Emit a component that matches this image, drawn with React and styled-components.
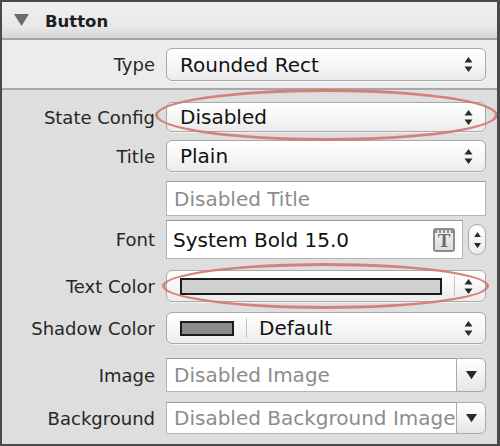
import React from "react";
import styled, { createGlobalStyle } from "styled-components";

const GlobalStyle = createGlobalStyle`
	html, body {
		margin: 0;
		padding: 0;
		background: #ffffff;
	}
	body {
		font-family: "DejaVu Sans", "Liberation Sans", sans-serif;
	}
`;

const Panel = styled.div`
	position: relative;
	width: 500px;
	height: 446px;
	box-sizing: border-box;
	border: 2px solid #4a4a4a;
	border-right-width: 3px;
	background: #dedede;
	overflow: hidden;
	display: flex;
	flex-direction: column;
`;

const Header = styled.div`
	height: 36px;
	flex: none;
	display: flex;
	align-items: center;
	gap: 16px;
	padding-left: 12px;
	background: linear-gradient(#efefef 0%, #e9e9e9 65%, #d6d6d6 100%);
	border-bottom: 2px solid #a3a3a3;
`;

const HeaderTitle = styled.span`
	font-weight: bold;
	font-size: 16.5px;
	color: #1e1e1e;
	margin-top: 2px;
`;

const Section = styled.div`
	background: ${(p) => p.$bg};
	padding-top: ${(p) => p.$top}px;
	padding-bottom: ${(p) => p.$bottom || 0}px;
	border-bottom: ${(p) => (p.$divider ? "2px solid #a8a8a8" : "none")};
	flex: ${(p) => (p.$grow ? 1 : "none")};
`;

const Row = styled.div`
	display: grid;
	grid-template-columns: 153px 320px;
	column-gap: 11px;
	align-items: center;
	height: ${(p) => p.$h}px;
	margin-top: ${(p) => p.$mt || 0}px;
`;

const Label = styled.div`
	text-align: right;
	font-size: 18px;
	color: #262626;
	white-space: nowrap;
`;

const PopUp = styled.div`
	height: ${(p) => p.$h || 32}px;
	box-sizing: border-box;
	border: 1px solid #a9a9a9;
	border-radius: 6px;
	background: linear-gradient(#ffffff 0%, #f7f7f7 50%, #ebebeb 100%);
	display: flex;
	align-items: center;
	padding-left: ${(p) => p.$pad ?? 13}px;
	padding-right: 12px;
	font-size: 20px;
	color: #111;
	box-shadow: 0 1px 0 rgba(255, 255, 255, 0.6);
`;

const Value = styled.span`
	flex: 1;
	white-space: nowrap;
	overflow: hidden;
`;

const TextField = styled.div`
	height: 35px;
	box-sizing: border-box;
	border: 1px solid #b4b4b4;
	border-top-color: #9a9a9a;
	background: #fff;
	display: flex;
	align-items: center;
	padding-left: 7px;
	font-size: 20px;
	color: ${(p) => (p.$placeholder ? "#8c8c8c" : "#111")};
	white-space: nowrap;
	overflow: hidden;
`;

const FontControls = styled.div`
	display: flex;
	align-items: center;
	gap: 5px;
`;

const FontField = styled(TextField)`
	width: 297px;
	height: 39px;
	padding-left: 6px;
	padding-right: 7px;
	flex: none;
`;

const FontIcon = styled.div`
	width: 18px;
	height: 20px;
	border: 2px solid #8d8d8d;
	border-radius: 3px;
	background: linear-gradient(#f4f4f4, #dcdcdc);
	position: relative;
	display: flex;
	align-items: flex-end;
	justify-content: center;
	font-family: "Liberation Serif", "DejaVu Serif", serif;
	font-weight: bold;
	font-size: 19px;
	line-height: 18px;
	color: #6d6d6d;
	margin-left: auto;
	flex: none;
	&::before {
		content: "";
		position: absolute;
		top: 0;
		left: 0;
		right: 0;
		height: 3px;
		background: repeating-linear-gradient(90deg, #8d8d8d 0 2px, #e0e0e0 2px 4px);
	}
`;

const Stepper = styled.div`
	width: 19px;
	height: 31px;
	box-sizing: border-box;
	border: 1px solid #a9a9a9;
	border-radius: 9px;
	background: linear-gradient(#ffffff, #ececec);
	display: flex;
	flex-direction: column;
	align-items: center;
	justify-content: space-between;
	padding: 7px 0 6px;
`;

const WellSlot = styled.div`
	flex: 1;
	display: flex;
	align-items: center;
	gap: 12px;
	height: 100%;
`;

const Well = styled.div`
	width: ${(p) => p.$w}px;
	height: ${(p) => p.$hh}px;
	box-sizing: border-box;
	border: 2px solid #1c1c1c;
	background: ${(p) => p.$fill};
	flex: none;
`;

const Divider = styled.div`
	width: 1px;
	align-self: stretch;
	margin: 5px 0;
	background: #c4c4c4;
	flex: none;
`;

const Combo = styled.div`
	display: flex;
	height: ${(p) => p.$h}px;
`;

const ComboField = styled(TextField)`
	flex: 1;
	height: 100%;
	border-right: none;
`;

const ComboButton = styled.div`
	width: 30px;
	flex: none;
	box-sizing: border-box;
	border: 1px solid #a9a9a9;
	border-radius: 0 6px 6px 0;
	background: linear-gradient(#ffffff, #e6e6e6);
	display: flex;
	align-items: center;
	justify-content: center;
`;

const Annotation = styled.div`
	position: absolute;
	left: ${(p) => p.$x}px;
	top: ${(p) => p.$y}px;
	width: ${(p) => p.$w}px;
	height: ${(p) => p.$h}px;
	box-sizing: border-box;
	border: 3px solid rgba(208, 120, 112, 0.9);
	border-radius: 50%;
	pointer-events: none;
`;

const Disclosure = () => (
	<svg width="15" height="12" viewBox="0 0 15 12">
		<path d="M0 0 H15 L7.5 12 Z" fill="#6b6b6b" />
	</svg>
);

const UpDown = () => (
	<svg width="9" height="15" viewBox="0 0 9 15">
		<path d="M4.5 0 L8.5 5.5 H0.5 Z" fill="#2a2a2a" />
		<path d="M0.5 9.5 H8.5 L4.5 15 Z" fill="#2a2a2a" />
	</svg>
);

const Tri = ({ down, size = 7 }) => (
	<svg width={size} height={size * 0.75} viewBox="0 0 8 6">
		<path d={down ? "M0 0 H8 L4 6 Z" : "M4 0 L8 6 H0 Z"} fill="#2a2a2a" />
	</svg>
);

const Field = ({ label, h, mt, children }) => (
	<Row $h={h} $mt={mt}>
		<Label>{label}</Label>
		{children}
	</Row>
);

export default function App() {
	return (
		<>
			<GlobalStyle />
			<Panel>
				<Header>
					<Disclosure />
					<HeaderTitle>Button</HeaderTitle>
				</Header>
				<Section $bg="#ececec" $top={8} $bottom={7} $divider>
					<Field label="Type" h={33}>
						<PopUp $h={33}>
							<Value>Rounded Rect</Value>
							<UpDown />
						</PopUp>
					</Field>
				</Section>
				<Section $bg="#dedede" $top={12} $grow>
					<Field label="State Config" h={30}>
						<PopUp $h={30}>
							<Value>Disabled</Value>
							<UpDown />
						</PopUp>
					</Field>
					<Field label="Title" h={32} mt={8}>
						<PopUp>
							<Value>Plain</Value>
							<UpDown />
						</PopUp>
					</Field>
					<Field label="" h={35} mt={9}>
						<TextField $placeholder>Disabled Title</TextField>
					</Field>
					<Field label="Font" h={39} mt={4}>
						<FontControls>
							<FontField>
								<Value>System Bold 15.0</Value>
								<FontIcon>T</FontIcon>
							</FontField>
							<Stepper>
								<Tri />
								<Tri down />
							</Stepper>
						</FontControls>
					</Field>
					<Field label="Text Color" h={32} mt={11}>
						<PopUp>
							<WellSlot>
								<Well $w={262} $hh={17} $fill="#d0d0d0" />
								<Divider />
							</WellSlot>
							<span style={{ marginLeft: 8 }} />
							<UpDown />
						</PopUp>
					</Field>
					<Field label="Shadow Color" h={32} mt={10}>
						<PopUp>
							<WellSlot>
								<Well $w={54} $hh={15} $fill="#8c8c8c" />
								<Divider />
								<Value>Default</Value>
							</WellSlot>
							<UpDown />
						</PopUp>
					</Field>
					<Field label="Image" h={34} mt={14}>
						<Combo $h={34}>
							<ComboField $placeholder>Disabled Image</ComboField>
							<ComboButton>
								<Tri down size={11} />
							</ComboButton>
						</Combo>
					</Field>
					<Field label="Background" h={32} mt={10}>
						<Combo $h={32}>
							<ComboField $placeholder>Disabled Background Image</ComboField>
							<ComboButton>
								<Tri down size={11} />
							</ComboButton>
						</Combo>
					</Field>
				</Section>
				<Annotation $x={153} $y={87} $w={343} $h={52} />
				<Annotation $x={160} $y={261} $w={327} $h={46} />
			</Panel>
		</>
	);
}
